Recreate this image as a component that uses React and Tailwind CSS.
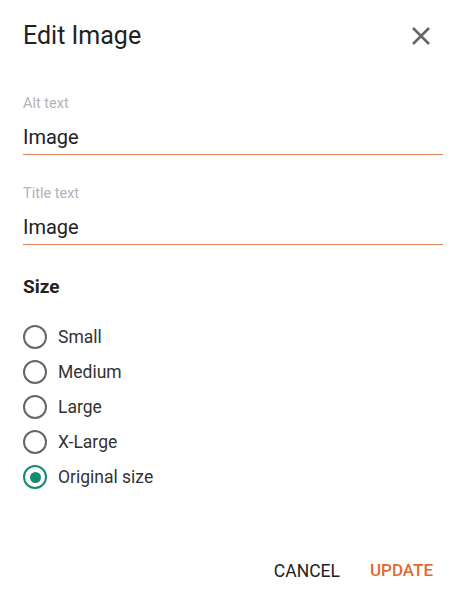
import { useState } from 'react'

const sizes = ['Small', 'Medium', 'Large', 'X-Large', 'Original size']

function Field({ label, value }) {
  return (
    <div className="flex flex-col">
      <label className="text-[14.5px] leading-[18px] text-[#b3b3b3]">{label}</label>
      <input
        defaultValue={value}
        className="mt-[8px] h-[34px] border-b border-[#d9875a] bg-transparent pt-[2px] pb-[4px] text-[20px] text-[#222] outline-none"
      />
    </div>
  )
}

export default function App() {
  const [size, setSize] = useState('Original size')

  return (
    <div className="h-[602px] w-[463px] bg-white font-['Roboto',sans-serif]">
      <div className="flex items-center justify-between pl-[23px] pr-[32px] pt-[21px]">
        <h1 className="text-[25px] leading-[30px] text-[#222]">Edit Image</h1>
        <button className="text-[#666]">
          <svg width="20" height="20" viewBox="0 0 20 20" fill="none" stroke="currentColor" strokeWidth="2.6">
            <path d="M2 2L18 18M18 2L2 18" />
          </svg>
        </button>
      </div>

      <div className="mt-[44px] flex flex-col gap-[30px] pl-[23px] pr-[20px]">
        <Field label="Alt text" value="Image" />
        <Field label="Title text" value="Image" />
      </div>

      <div className="mt-[30px] px-[23px]">
        <h2 className="text-[19px] font-bold leading-[24px] text-[#222]">Size</h2>
        <div className="mt-[26px] flex flex-col gap-[11px]">
          {sizes.map(s => (
            <label key={s} className="flex cursor-pointer items-center gap-[11px]" onClick={() => setSize(s)}>
              <span
                className={`flex h-[24px] w-[24px] items-center justify-center rounded-full border-2 ${
                  size === s ? 'border-[#138a72]' : 'border-[#666]'
                }`}
              >
                {size === s && <span className="h-[11px] w-[11px] rounded-full bg-[#138a72]" />}
              </span>
              <span className="text-[17.5px] leading-[24px] text-[#333]">{s}</span>
            </label>
          ))}
        </div>
      </div>

      <div className="mt-[69px] flex justify-end gap-[30px] pr-[30px]">
        <button className="text-[17.5px] text-[#222]">CANCEL</button>
        <button className="text-[17px] font-medium text-[#dd6b33]">UPDATE</button>
      </div>
    </div>
  )
}
